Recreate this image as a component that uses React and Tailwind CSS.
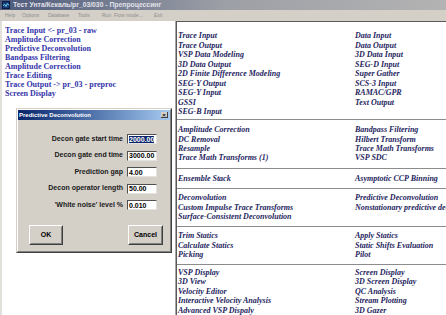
import React from 'react';

const flow = [
  'Trace Input <- pr_03 - raw',
  'Amplitude Correction',
  'Predictive Deconvolution',
  'Bandpass Filtering',
  'Amplitude Correction',
  'Trace Editing',
  'Trace Output -> pr_03 - preproc',
  'Screen Display',
];

const menu = [
  ['Help', 'w-[17px]'],
  ['Options', 'w-[26px]'],
  ['Database', 'w-[30px]'],
  ['Tools', 'w-[24px]'],
  ['Run', 'w-[12px]'],
  ['Flow mode...', 'w-[40px]'],
  ['Exit', 'w-[14px]'],
];

// modules list, grouped like the original flow editor
const groups = [
  {
    box: 'h-[97px] pt-[9px] justify-start',
    row: 'h-[9.5px] leading-[9.5px]',
    left: ['Trace Input', 'Trace Output', 'VSP Data Modeling', '3D Data Output', '2D Finite Difference Modeling', 'SEG-Y Output', 'SEG-Y Input', 'GSSI', 'SEG-B Input'],
    right: ['Data Input', 'Data Output', '3D Data Input', 'SEG-D Input', 'Super Gather', 'SCS-3 Input', 'RAMAC/GPR', 'Text Output'],
  },
  {
    box: 'h-[48px] justify-center',
    row: 'h-[9.4px] leading-[9.4px]',
    left: ['Amplitude Correction', 'DC Removal', 'Resample', 'Trace Math Transforms (1)'],
    right: ['Bandpass Filtering', 'Hilbert Transform', 'Trace Math Transforms', 'VSP SDC'],
  },
  {
    box: 'h-[19px] justify-center',
    row: 'h-[9.4px] leading-[9.4px]',
    left: ['Ensemble Stack'],
    right: ['Asymptotic CCP Binning'],
  },
  {
    box: 'h-[37px] justify-center',
    row: 'h-[9.4px] leading-[9.4px]',
    left: ['Deconvolution', 'Custom Impulse Trace Transforms', 'Surface-Consistent Deconvolution'],
    right: ['Predictive Deconvolution', 'Nonstationary predictive deconvolution', ''],
  },
  {
    box: 'h-[37px] justify-center',
    row: 'h-[9.4px] leading-[9.4px]',
    left: ['Trim Statics', 'Calculate Statics', 'Picking'],
    right: ['Apply Statics', 'Static Shifts Evaluation', 'Pilot'],
  },
  {
    box: 'flex-1 pt-[3px] justify-start',
    row: 'h-[9.4px] leading-[9.4px]',
    left: ['VSP Display', '3D View', 'Velocity Editor', 'Interactive Velocity Analysis', 'Advanced VSP Dispaly'],
    right: ['Screen Display', '3D Screen Display', 'QC Analysis', 'Stream Plotting', '3D Gazer'],
  },
];

const fields = [
  ['Decon gate start time', '2000.00', true],
  ['Decon gate end time', '3000.00'],
  ['Prediction gap', '4.00'],
  ['Decon operator length', '50.00'],
  ["'White noise' level %", '0.010'],
];

const TitleBar = () => (
  <div className="h-[10px] flex items-center bg-linear-to-r from-[#4d5a7b] via-[#9d9fa6] to-[#b3b3b3]">
    <svg width="8" height="8" viewBox="0 0 8 8" className="ml-[2px] mr-[3px] shrink-0">
      <rect x="0.5" y="0.5" width="7" height="7" fill="#1c3a78" stroke="#0a1a40" strokeWidth="1" />
      <path d="M1 5 L2.5 3 L4 5.5 L5.5 2.5 L7 4.5" stroke="#62d2e8" strokeWidth="1" fill="none" />
    </svg>
    <span className="text-[6.8px] font-bold text-[#e2e2ea] leading-none whitespace-nowrap">
      Тест Унта/Кекаль/pr_03/030 - Препроцессинг
    </span>
  </div>
);

const MenuBar = () => (
  <div className="h-[11px] flex items-center pl-[5px] bg-[#d4d0c8] text-[5px] leading-none text-[#8e8e8e]">
    {menu.map(([label, w]) => (
      <span key={label} className={`${w} whitespace-nowrap`}>{label}</span>
    ))}
  </div>
);

const Button = ({ label, className }) => (
  <div className={`${className} h-[20px] border border-t-white border-l-white border-r-[#404040] border-b-[#404040]`}>
    <div className="h-full flex items-center justify-center border border-t-[#d4d0c8] border-l-[#d4d0c8] border-r-[#808080] border-b-[#808080] text-[7px] font-bold text-black">
      {label}
    </div>
  </div>
);

const Dialog = () => (
  <div className="absolute left-[16px] top-[108px] w-[156px] h-[145px] bg-[#d4d0c8] border border-t-[#d4d0c8] border-l-[#d4d0c8] border-r-[#404040] border-b-[#404040]">
    <div className="h-full flex flex-col border border-t-white border-l-white border-r-[#808080] border-b-[#808080]">
      <div className="h-[10px] flex items-center justify-between pl-[1px] bg-linear-to-r from-[#0a246a] to-[#a6caf0]">
        <span className="text-[6px] font-bold text-white leading-none">Predictive Deconvolution</span>
        <span className="w-[7px] h-[6px] mr-[2px] flex items-center justify-center bg-[#d4d0c8] border-r border-b border-[#404040] text-[6px] font-bold leading-none text-black">
          ×
        </span>
      </div>

      <div className="flex flex-col pt-[10.75px]">
        {fields.map(([label, value, selected]) => (
          <div key={label} className="h-[16.5px] flex items-center">
            <span className="w-[105px] text-right text-[7px] font-bold text-[#1a1a1a] whitespace-nowrap">{label}</span>
            <div className="ml-[4px] w-[30px] h-[10px] bg-white border border-t-[#505050] border-l-[#505050] border-r-[#e4e2de] border-b-[#e4e2de] flex items-center pl-[1px]">
              <span className={`text-[7px] font-bold leading-[7px] ${selected ? 'bg-[#0a246a] text-white' : 'text-black'}`}>
                {value}
              </span>
            </div>
          </div>
        ))}
      </div>

      <div className="flex justify-between pl-[11px] pr-[7px] mt-[11.75px]">
        <Button label="OK" className="w-[34px]" />
        <Button label="Cancel" className="w-[35px]" />
      </div>
    </div>
  </div>
);

const ModuleGroup = ({ group }) => (
  <div className={`${group.box} flex flex-col shrink-0`}>
    <div className="flex">
      <div className="w-[178px] pl-[1px] flex flex-col">
        {group.left.map((m, i) => (
          <div key={i} className={`${group.row} whitespace-nowrap`}>{m}</div>
        ))}
      </div>
      <div className="flex-1 min-w-0 flex flex-col">
        {group.right.map((m, i) => (
          <div key={i} className={`${group.row} whitespace-nowrap`}>{m}</div>
        ))}
      </div>
    </div>
  </div>
);

export default function App() {
  return (
    <div className="relative w-[446px] h-[315px] overflow-hidden flex flex-col bg-[#d4d0c8] font-['Liberation_Sans',Arial,sans-serif]">
      <TitleBar />
      <MenuBar />

      <div className="flex flex-1 min-h-0">
        {/* flow */}
        <div className="w-[176px] shrink-0 bg-white border-l-2 border-l-[#e2e0da] border-r border-r-[#a8a8a8] pl-[3px] pt-[4.5px] font-['Liberation_Serif',serif] font-bold text-[8px] text-[#3434aa]">
          {flow.map((item, i) => (
            <div key={i} className="h-[9px] leading-[9px] whitespace-nowrap">{item}</div>
          ))}
        </div>

        {/* modules */}
        <div className="flex-1 min-w-0 overflow-hidden flex flex-col bg-white border-t border-l border-[#5a5a5a] font-['Liberation_Serif',serif] font-bold italic text-[8px] text-[#1e1e5e]">
          {groups.map((g, i) => (
            <React.Fragment key={i}>
              {i > 0 && <div className="h-px shrink-0 bg-[#8c8c8c]" />}
              <ModuleGroup group={g} />
            </React.Fragment>
          ))}
        </div>
      </div>

      <Dialog />
    </div>
  );
}
